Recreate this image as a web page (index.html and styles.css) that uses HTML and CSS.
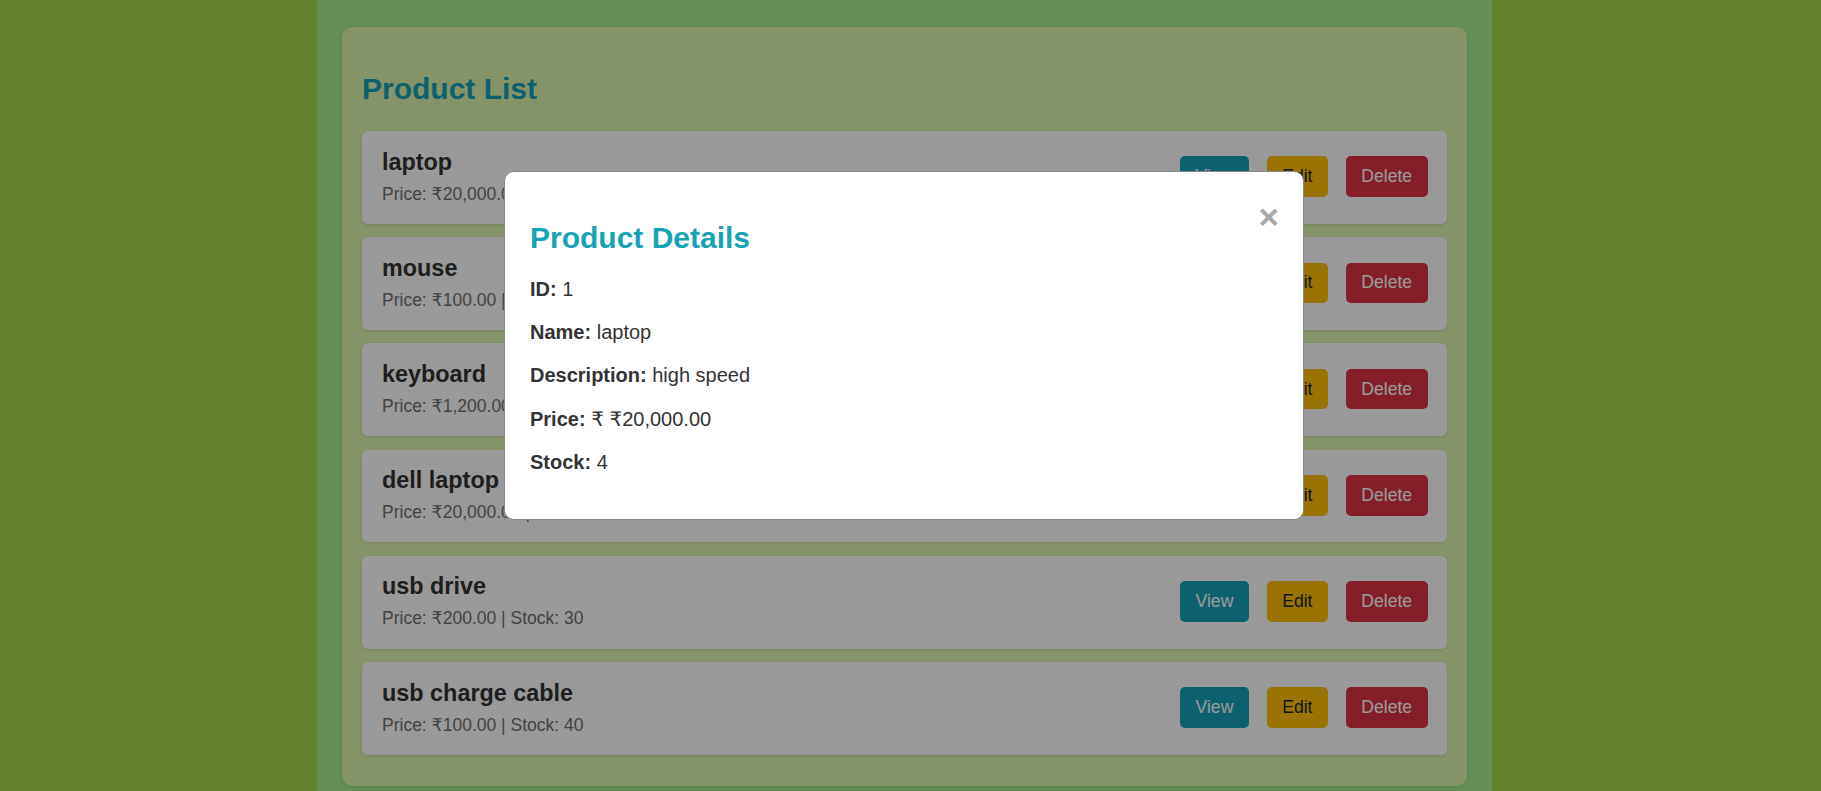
FILE: index.html
```html
<!DOCTYPE html>
<html lang="en">
<head>
<meta charset="utf-8">
<title>Product List</title>
<link rel="stylesheet" href="styles.css">
</head>
<body>
<div class="container">
  <div class="card">
    <h2 class="title">Product List</h2>
    <div class="list">
      <div class="item">
        <div class="info"><h3>laptop</h3><p>Price: ₹20,000.00 | Stock: 4</p></div>
        <div class="actions"><button class="btn view">View</button><button class="btn edit">Edit</button><button class="btn delete">Delete</button></div>
      </div>
      <div class="item">
        <div class="info"><h3>mouse</h3><p>Price: ₹100.00 | Stock: 10</p></div>
        <div class="actions"><button class="btn view">View</button><button class="btn edit">Edit</button><button class="btn delete">Delete</button></div>
      </div>
      <div class="item">
        <div class="info"><h3>keyboard</h3><p>Price: ₹1,200.00 | Stock: 15</p></div>
        <div class="actions"><button class="btn view">View</button><button class="btn edit">Edit</button><button class="btn delete">Delete</button></div>
      </div>
      <div class="item">
        <div class="info"><h3>dell laptop</h3><p>Price: ₹20,000.00 | Stock: 5</p></div>
        <div class="actions"><button class="btn view">View</button><button class="btn edit">Edit</button><button class="btn delete">Delete</button></div>
      </div>
      <div class="item">
        <div class="info"><h3>usb drive</h3><p>Price: ₹200.00 | Stock: 30</p></div>
        <div class="actions"><button class="btn view">View</button><button class="btn edit">Edit</button><button class="btn delete">Delete</button></div>
      </div>
      <div class="item">
        <div class="info"><h3>usb charge cable</h3><p>Price: ₹100.00 | Stock: 40</p></div>
        <div class="actions"><button class="btn view">View</button><button class="btn edit">Edit</button><button class="btn delete">Delete</button></div>
      </div>
    </div>
  </div>
</div>

<div class="overlay">
  <div class="modal">
    <span class="close">&times;</span>
    <h2 class="modal-title">Product Details</h2>
    <p><strong>ID:</strong> 1</p>
    <p><strong>Name:</strong> laptop</p>
    <p><strong>Description:</strong> high speed</p>
    <p><strong>Price:</strong> ₹ ₹20,000.00</p>
    <p><strong>Stock:</strong> 4</p>
  </div>
</div>
</body>
</html>
```

FILE: styles.css
```css
html, body {
  margin: 0;
  height: 100%;
  overflow: hidden;
}

body {
  background: #a5d94e;
  padding-right: 12px;
  box-sizing: border-box;
  font-family: "Liberation Sans", Arial, "DejaVu Sans", sans-serif;
  color: #333;
}

.container {
  width: 1175px;
  margin: 0 auto;
  background: #a8ee8e;
  padding: 27px 25px 20px;
  box-sizing: border-box;
}

.card {
  background: #def5af;
  border-radius: 10px;
  padding: 20px 20px 31.7px;
  box-shadow: 0 1px 4px rgba(0, 0, 0, 0.12);
}

.title {
  font-size: 30px;
  font-weight: bold;
  color: #17a2b8;
  margin: 24.9px 0 25.2px;
  line-height: normal;
}

.list {
  display: flex;
  flex-direction: column;
  gap: 13.4px;
}

.item {
  display: flex;
  align-items: center;
  justify-content: space-between;
  background: #fff;
  border-radius: 6px;
  padding: 17.6px 19.5px 19.2px 20px;
  box-shadow: 0 1px 3px rgba(0, 0, 0, 0.12);
}

.info h3 {
  margin: 0 0 8px;
  font-size: 23.4px;
  font-weight: bold;
  color: #333;
  line-height: normal;
}

.info p {
  margin: 0;
  font-size: 17.5px;
  color: #717171;
  line-height: normal;
}

.actions {
  display: flex;
  gap: 18px;
}

.btn {
  height: 40.7px;
  padding: 0 15.4px;
  border: none;
  border-radius: 5px;
  font-family: "Liberation Sans", Arial, sans-serif;
  font-size: 17.6px;
  cursor: pointer;
}

.view {
  background: #17a2b8;
  color: #fff;
}

.edit {
  background: #ffc107;
  color: #212529;
}

.delete {
  background: #dc3545;
  color: #fff;
}

.overlay {
  position: fixed;
  inset: 0;
  background: rgba(0, 0, 0, 0.4);
  display: flex;
  justify-content: center;
  align-items: flex-start;
  padding: 171px 13px 0 0;
  box-sizing: border-box;
}

.modal {
  width: 800px;
  box-sizing: border-box;
  background: #fff;
  border: 1px solid #888;
  border-radius: 10px;
  padding: 25px 24px 25px 25px;
  font-size: 20px;
  color: #333;
}

.close {
  float: right;
  font-size: 35px;
  font-weight: bold;
  color: #aaa;
  line-height: normal;
  cursor: pointer;
}

.modal-title {
  font-size: 30px;
  font-weight: bold;
  color: #17a2b8;
  margin: 23.5px 0;
  line-height: normal;
}

.modal p {
  margin: 20px 0;
  line-height: normal;
}
```
